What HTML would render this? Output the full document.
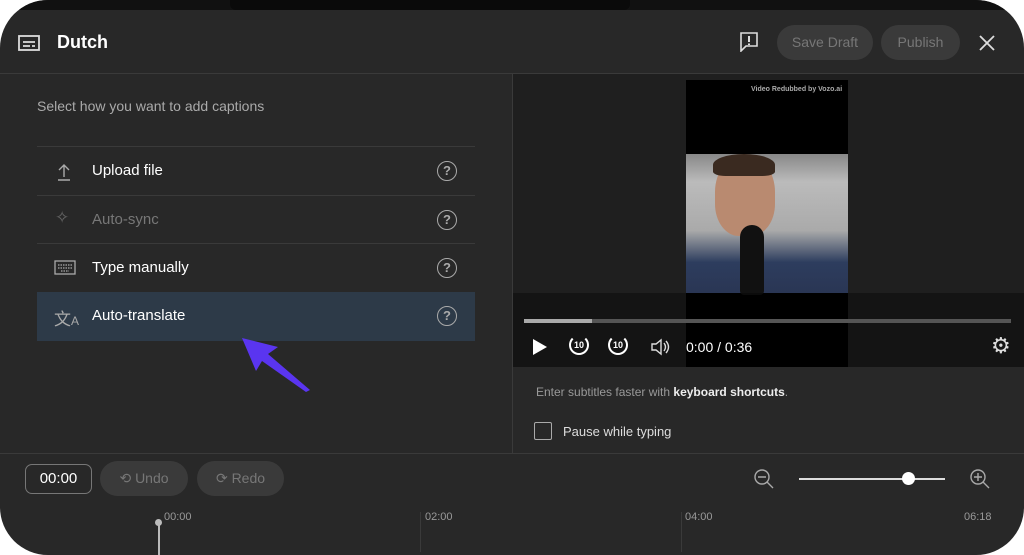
<!DOCTYPE html>
<html><head><style>
*{margin:0;padding:0;box-sizing:border-box}
body{width:1024px;height:555px;background:#fff;position:relative;overflow:hidden;font-family:"Liberation Sans",sans-serif;color:#fff}
.panel{position:absolute;left:0;top:0;width:1024px;height:555px;background:#282828;border-radius:48px 48px 48px 48px;overflow:hidden}
.a{position:absolute}
.hl{position:absolute;height:1px;background:#3a3a3a}
.row{position:absolute;left:37px;width:438px;height:48px;border-top:1px solid #3a3a3a}
.row .t{position:absolute;left:55px;top:15px;font-size:15px}
.q{position:absolute;left:400px;top:14px;width:20px;height:20px;border:1.6px solid #aaa;border-radius:50%;font-size:13px;color:#aaa;text-align:center;line-height:17px;font-weight:bold}
.btn{position:absolute;border-radius:18px;background:#3a3a3a;color:#777;font-size:14px;text-align:center}
</style></head><body>
<div class="panel">
<div class="a" style="left:0;top:0;width:1024px;height:10px;background:#111"></div>
<div class="a" style="left:230px;top:0;width:400px;height:10px;background:#0a0a0a;border-radius:0 0 6px 6px"></div>
<!-- header -->
<svg class="a" style="left:18px;top:34px" width="22" height="18" viewBox="0 0 22 18"><rect x="1" y="2" width="20" height="14" fill="none" stroke="#ddd" stroke-width="1.8"/><path d="M5 8h12M5 12h7M14 12h3" stroke="#ddd" stroke-width="1.8"/></svg>
<div class="a" style="left:57px;top:32px;font-size:18px;font-weight:bold">Dutch</div>
<svg class="a" style="left:740px;top:32px" width="18" height="20" viewBox="0 0 18 20"><path d="M1 1h16v13H6l-5 5z" fill="none" stroke="#ddd" stroke-width="1.6"/><path d="M9 4v6M9 11.5v1.5" stroke="#ddd" stroke-width="2"/></svg>
<div class="btn" style="left:777px;top:25px;width:96px;height:35px;line-height:35px">Save Draft</div>
<div class="btn" style="left:881px;top:25px;width:79px;height:35px;line-height:35px">Publish</div>
<svg class="a" style="left:978px;top:34px" width="18" height="18"><path d="M2 2l14 14M16 2L2 16" stroke="#ddd" stroke-width="1.8"/></svg>
<div class="hl" style="left:0;top:73px;width:1024px"></div>
<!-- left -->
<div class="a" style="left:37px;top:98px;font-size:14px;color:#aaa">Select how you want to add captions</div>
<div class="row" style="top:146px"><svg class="a" style="left:18px;top:15px" width="18" height="20"><path d="M9 15V3M4 8l5-5 5 5M3 18h12" stroke="#aaa" stroke-width="1.4" fill="none"/></svg><div class="t">Upload file</div><div class="q">?</div></div>
<div class="row" style="top:195px"><div class="a" style="left:18px;top:12px;color:#666;font-size:17px">✧</div><div class="t" style="color:#777">Auto-sync</div><div class="q">?</div></div>
<div class="row" style="top:243px"><svg class="a" style="left:17px;top:16px" width="22" height="16"><rect x="1" y="1" width="20" height="13" fill="none" stroke="#aaa" stroke-width="1.3"/><path d="M4 5h14M4 8h14M7 11h8" stroke="#aaa" stroke-width="1.3" stroke-dasharray="1.5 1"/></svg><div class="t">Type manually</div><div class="q">?</div></div>
<div class="row" style="top:292px;background:#2d3a48;border-top:none;height:49px"><div class="a" style="left:17px;top:13px;color:#aaa;font-size:17px">文<span style="font-size:12px">A</span></div><div class="t">Auto-translate</div><div class="q">?</div></div>
<svg class="a" style="left:236px;top:334px" width="80" height="62"><path d="M6 4L42 13 32 20 74 56 70 58 26 27 20 37z" fill="#5a35f0"/></svg>
<!-- right -->
<div class="a" style="left:512px;top:74px;width:1px;height:380px;background:#3a3a3a"></div>
<div class="a" style="left:513px;top:74px;width:511px;height:293px;background:#1f1f1f"></div>
<div class="a" style="left:686px;top:80px;width:162px;height:287px;background:#000"></div>
<div class="a" style="left:751px;top:86px;font-size:7px;color:#aaa;font-weight:bold">Video Redubbed by Vozo.ai</div>
<div class="a" style="left:686px;top:154px;width:162px;height:139px;background:linear-gradient(180deg,#888 0%,#bbb 20%,#aaa 55%,#2d3d5e 78%,#2a3654 100%)"></div>
<div class="a" style="left:715px;top:156px;width:60px;height:80px;background:#b98a70;border-radius:45% 45% 40% 40%"></div>
<div class="a" style="left:713px;top:154px;width:62px;height:22px;background:#3a2a20;border-radius:50% 50% 20% 20%"></div>
<div class="a" style="left:740px;top:225px;width:24px;height:70px;background:#111;border-radius:12px 12px 4px 4px"></div>
<div class="a" style="left:513px;top:293px;width:511px;height:74px;background:rgba(0,0,0,.35)"></div>
<div class="a" style="left:524px;top:319px;width:487px;height:4px;background:#555"></div>
<div class="a" style="left:524px;top:319px;width:68px;height:4px;background:#aaa"></div>
<svg class="a" style="left:532px;top:338px" width="16" height="18"><path d="M1 1l14 8-14 8z" fill="#fff"/></svg>
<div class="a" style="left:569px;top:335px;width:20px;height:20px;border:2px solid #fff;border-radius:50%;border-top-color:transparent;font-size:9px;text-align:center;line-height:16px;font-weight:bold">10</div>
<div class="a" style="left:608px;top:335px;width:20px;height:20px;border:2px solid #fff;border-radius:50%;border-top-color:transparent;font-size:9px;text-align:center;line-height:16px;font-weight:bold">10</div>
<svg class="a" style="left:650px;top:338px" width="20" height="18"><path d="M2 6h4l5-4v14l-5-4H2z" fill="none" stroke="#ddd" stroke-width="1.4"/><path d="M14 5q3 4 0 8M16 3q5 6 0 12" fill="none" stroke="#ddd" stroke-width="1.4"/></svg>
<div class="a" style="left:686px;top:339px;font-size:14px">0:00 / 0:36</div>
<div class="a" style="left:991px;top:334px;font-size:22px;color:#ddd;line-height:24px">⚙</div>
<div class="a" style="left:536px;top:385px;font-size:12px;color:#999">Enter subtitles faster with <b style="color:#eee">keyboard shortcuts</b>.</div>
<div class="a" style="left:534px;top:422px;width:18px;height:18px;border:1.6px solid #aaa;border-radius:2px"></div>
<div class="a" style="left:563px;top:424px;font-size:13px;color:#ddd">Pause while typing</div>
<!-- bottom -->
<div class="hl" style="left:0;top:453px;width:1024px"></div>
<div class="a" style="left:25px;top:464px;width:67px;height:30px;border:1px solid #777;border-radius:7px;font-size:15px;text-align:center;line-height:28px">00:00</div>
<div class="btn" style="left:100px;top:461px;width:88px;height:35px;line-height:35px">⟲ Undo</div>
<div class="btn" style="left:197px;top:461px;width:87px;height:35px;line-height:35px">⟳ Redo</div>
<svg class="a" style="left:753px;top:468px" width="22" height="22"><circle cx="9" cy="9" r="7" fill="none" stroke="#aaa" stroke-width="1.4"/><path d="M5 9h8M14 14l6 6" stroke="#aaa" stroke-width="1.4"/></svg>
<div class="a" style="left:799px;top:478px;width:146px;height:2px;background:#ddd"></div>
<div class="a" style="left:902px;top:472px;width:13px;height:13px;background:#fff;border-radius:50%"></div>
<svg class="a" style="left:969px;top:468px" width="22" height="22"><circle cx="9" cy="9" r="7" fill="none" stroke="#aaa" stroke-width="1.4"/><path d="M5 9h8M9 5v8M14 14l6 6" stroke="#aaa" stroke-width="1.4"/></svg>
<div class="a" style="left:164px;top:511px;font-size:11px;color:#999">00:00</div>
<div class="a" style="left:425px;top:511px;font-size:11px;color:#999">02:00</div>
<div class="a" style="left:685px;top:511px;font-size:11px;color:#999">04:00</div>
<div class="a" style="left:964px;top:511px;font-size:11px;color:#999">06:18</div>
<div class="a" style="left:420px;top:512px;width:1px;height:40px;background:#3a3a3a"></div>
<div class="a" style="left:681px;top:512px;width:1px;height:40px;background:#3a3a3a"></div>
<div class="a" style="left:155px;top:519px;width:7px;height:7px;background:#bbb;border-radius:50%"></div>
<div class="a" style="left:158px;top:522px;width:1.5px;height:40px;background:#bbb"></div>
</div>
</body></html>
